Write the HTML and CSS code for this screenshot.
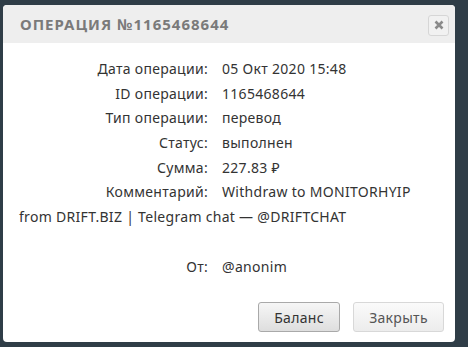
FILE: index.html
```html
<!DOCTYPE html>
<html lang="ru">
<head>
<meta charset="utf-8">
<link rel="stylesheet" href="styles.css">
</head>
<body>
<div class="modal">
  <div class="modal-header">
    <h3 class="modal-title">Операция №1165468644</h3>
    <button class="close" type="button">
      <svg width="10" height="10" viewBox="0 0 10 10"><path d="M1.5 1.5 L8.5 8.5 M8.5 1.5 L1.5 8.5" stroke="#8a8a8a" stroke-width="2.6" stroke-linecap="butt"/></svg>
    </button>
  </div>
  <div class="modal-body">
    <div class="row"><span class="label">Дата операции:</span><span class="value">05 Окт 2020 15:48</span></div>
    <div class="row"><span class="label">ID операции:</span><span class="value">1165468644</span></div>
    <div class="row"><span class="label">Тип операции:</span><span class="value">перевод</span></div>
    <div class="row"><span class="label">Статус:</span><span class="value">выполнен</span></div>
    <div class="row"><span class="label">Сумма:</span><span class="value">227.83 ₽</span></div>
    <div class="row"><span class="label">Комментарий:</span><span class="value">Withdraw to MONITORHYIP</span></div>
    <div class="row"><span class="value">from DRIFT.BIZ | Telegram chat — @DRIFTCHAT</span></div>
    <div class="row empty">&nbsp;</div>
    <div class="row"><span class="label">От:</span><span class="value">@anonim</span></div>
  </div>
  <div class="modal-footer">
    <button class="btn btn-primary" type="button">Баланс</button>
    <button class="btn btn-light" type="button">Закрыть</button>
  </div>
</div>
</body>
</html>
```

FILE: styles.css
```css
html, body {
  margin: 0;
  padding: 0;
  background: #2f3d47;
  width: 468px;
  height: 347px;
  overflow: hidden;
}
body {
  padding: 5px 0 0 3px;
  box-sizing: border-box;
  font-family: "Noto Sans", "Open Sans", sans-serif;
}
.modal {
  width: 452px;
  height: 337px;
  background: #fff;
  border-radius: 4px;
  overflow: hidden;
  display: flex;
  flex-direction: column;
}
.modal-header {
  height: 38px;
  background: #eeeeee;
  display: flex;
  align-items: center;
  justify-content: space-between;
  padding: 0 6px 0 17px;
}
.modal-title {
  margin: 0;
  font-size: 15px;
  font-weight: 700;
  color: #7a7a7a;
  text-transform: uppercase;
  letter-spacing: 1px;
}
.close {
  width: 21px;
  height: 21px;
  padding: 0;
  margin-top: 2px;
  border: 1px solid #d6d6d6;
  border-radius: 3px;
  background: #f1f1f1;
  display: flex;
  align-items: center;
  justify-content: center;
}
.modal-body {
  padding: 14px 40px 0 16px;
  font-size: 14px;
  color: #333;
  line-height: 24.7px;
  letter-spacing: 0.3px;
}
.row {
  height: 24.7px;
  white-space: nowrap;
}
.label {
  display: inline-block;
  width: 189px;
  text-align: right;
  margin-right: 14px;
}
.modal-footer {
  display: flex;
  justify-content: flex-end;
  gap: 13px;
  padding: 23px 11px 0 0;
}
.btn {
  height: 30px;
  border-radius: 3px;
  font-family: "Noto Sans", "Open Sans", sans-serif;
  font-size: 14px;
  letter-spacing: 0.3px;
  padding: 0;
  cursor: pointer;
}
.btn-primary {
  width: 82px;
  border: 1px solid #a9a9a9;
  background: linear-gradient(#f6f6f6, #dedede);
  color: #333;
}
.btn-light {
  width: 91px;
  border: 1px solid #d8d8d8;
  background: linear-gradient(#fafafa, #ececec);
  color: #555;
}
```
